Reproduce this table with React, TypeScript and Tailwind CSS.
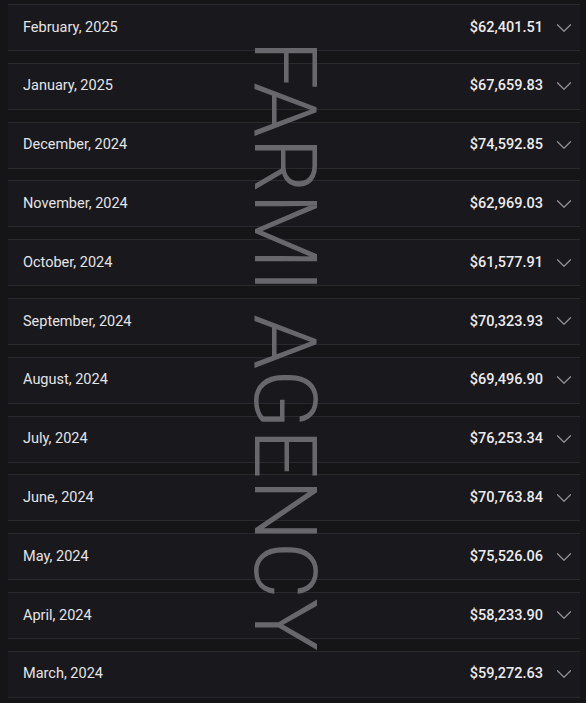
import { ChevronDown } from 'lucide-react';

const months = [
  { label: 'February, 2025', amount: '$62,401.51' },
  { label: 'January, 2025', amount: '$67,659.83' },
  { label: 'December, 2024', amount: '$74,592.85' },
  { label: 'November, 2024', amount: '$62,969.03' },
  { label: 'October, 2024', amount: '$61,577.91' },
  { label: 'September, 2024', amount: '$70,323.93' },
  { label: 'August, 2024', amount: '$69,496.90' },
  { label: 'July, 2024', amount: '$76,253.34' },
  { label: 'June, 2024', amount: '$70,763.84' },
  { label: 'May, 2024', amount: '$75,526.06' },
  { label: 'April, 2024', amount: '$58,233.90' },
  { label: 'March, 2024', amount: '$59,272.63' },
];

export default function App() {
  return (
    <div className="relative w-[586px] h-[703px] overflow-hidden bg-[#151417] px-[8px] pt-[4px] font-['Roboto',sans-serif]">
      <div className="flex flex-col gap-[11.8px] w-[572px]">
        {months.map((m) => (
          <div
            key={m.label}
            className="flex items-center h-[47px] pl-[15px] pr-[3px] bg-[#19181c] border-y border-[#2a292e]"
          >
            <span className="text-[14.5px] text-[#e4e4e6]">{m.label}</span>
            <span className="ml-auto text-[14.5px] font-medium text-[#ececee]">{m.amount}</span>
            <ChevronDown className="ml-[8px] w-[26px] h-[26px] text-[#8e8d92]" strokeWidth={1.2} />
          </div>
        ))}
      </div>

      {/* watermark */}
      <div className="absolute left-[241px] top-[40px] [writing-mode:vertical-rl] text-[88px] leading-none font-light text-[#68676c] whitespace-nowrap pointer-events-none">
        FARMI AGENCY
      </div>
    </div>
  );
}
